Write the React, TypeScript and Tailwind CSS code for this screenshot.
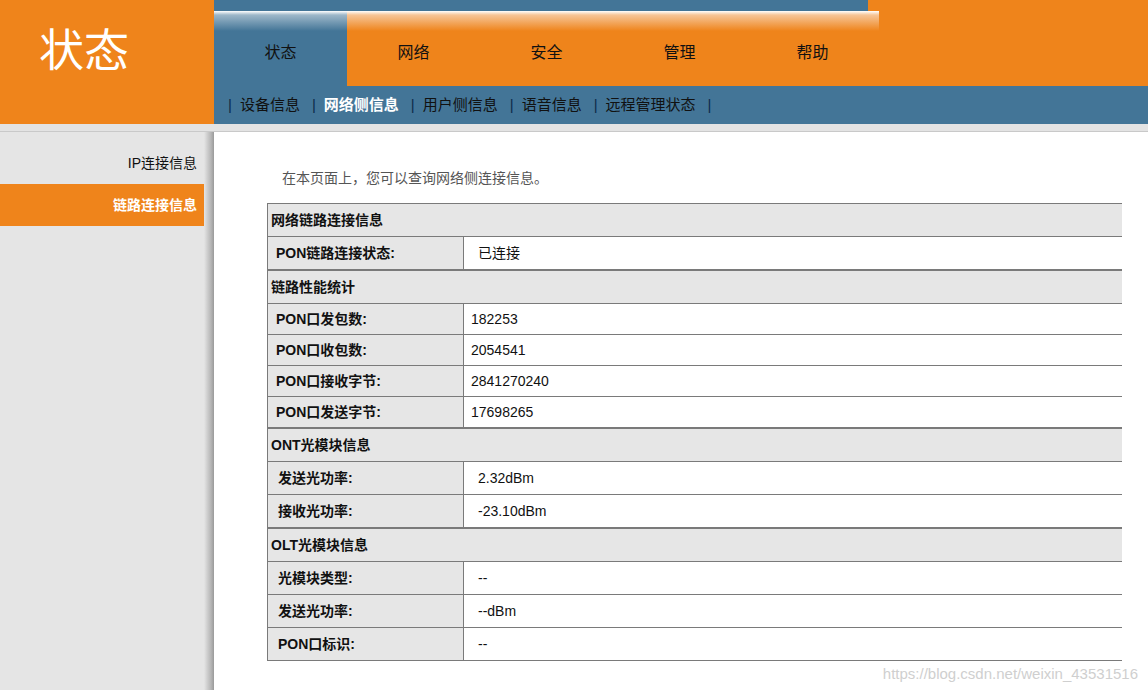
const ORANGE = 'bg-[#ef841b]';

const tabs = ['状态', '网络', '安全', '管理', '帮助'];
const subnav = ['设备信息', '网络侧信息', '用户侧信息', '语音信息', '远程管理状态'];

type Row = { label: string; value: string };
type Section = { title: string; rows: Row[]; rowH: string; labelPad: string; valuePad: string };

const sections: Section[] = [
    {
        title: '网络链路连接信息',
        rows: [{ label: 'PON链路连接状态:', value: '已连接' }],
        rowH: 'h-[33px]',
        labelPad: 'pl-[8px]',
        valuePad: 'pl-[14px]'
    },
    {
        title: '链路性能统计',
        rows: [
            { label: 'PON口发包数:', value: '182253' },
            { label: 'PON口收包数:', value: '2054541' },
            { label: 'PON口接收字节:', value: '2841270240' },
            { label: 'PON口发送字节:', value: '17698265' }
        ],
        rowH: 'h-[31px]',
        labelPad: 'pl-[8px]',
        valuePad: 'pl-[7px]'
    },
    {
        title: 'ONT光模块信息',
        rows: [
            { label: '发送光功率:', value: '2.32dBm' },
            { label: '接收光功率:', value: '-23.10dBm' }
        ],
        rowH: 'h-[33px]',
        labelPad: 'pl-[10px]',
        valuePad: 'pl-[14px]'
    },
    {
        title: 'OLT光模块信息',
        rows: [
            { label: '光模块类型:', value: '--' },
            { label: '发送光功率:', value: '--dBm' },
            { label: 'PON口标识:', value: '--' }
        ],
        rowH: 'h-[33px]',
        labelPad: 'pl-[10px]',
        valuePad: 'pl-[14px]'
    }
];

export default function App() {
    return (
        <div className="w-[1148px] h-[690px] overflow-hidden bg-[#e5e5e5] font-['Liberation_Sans','Noto_Sans_CJK_SC',sans-serif] text-[#111]">
            {/* header */}
            <div className="flex h-[124px]">
                <div className={`w-[214px] ${ORANGE} pl-[39px] pt-[22px]`}>
                    <span className="text-[45px] leading-[52px] text-white font-['Noto_Sans_CJK_SC',serif]">状态</span>
                </div>
                <div className={`flex-1 flex flex-col ${ORANGE}`}>
                    <div className="flex h-[11px]">
                        <div className="w-[654px] bg-[#437597]" />
                    </div>
                    <div className="flex h-[75px]">
                        {tabs.map((t, i) => (
                            <div
                                key={t}
                                className={`w-[133px] flex justify-center pt-[30px] text-[16px] ${
                                    i === 0
                                        ? 'bg-[linear-gradient(to_bottom,#ffffff_0px,#9db7c9_4px,#437597_20px)]'
                                        : 'bg-[linear-gradient(to_bottom,#ffffff_0px,#f6c597_4px,#ef841b_20px)]'
                                }`}
                            >
                                {t}
                            </div>
                        ))}
                    </div>
                    <div className="h-[38px] bg-[#437597] flex items-center pl-[2px] text-[15px]">
                        {subnav.map((s, i) => (
                            <div key={s} className="flex items-center">
                                <span className="text-[#0c2a4a] pl-[12px] pr-[8px]">|</span>
                                <span className={i === 1 ? 'font-bold text-white' : ''}>{s}</span>
                            </div>
                        ))}
                        <span className="text-[#0c2a4a] pl-[12px]">|</span>
                    </div>
                </div>
            </div>

            {/* body */}
            <div className="h-[8px] bg-[#e3e3e3] border-b border-[#c9c9c9]" />
            <div className="flex h-[558px]">
                <div className="w-[204px] pt-[10px] text-[14px]">
                    <div className="h-[42px] flex items-center justify-end pr-[7px]">IP连接信息</div>
                    <div className={`h-[42px] flex items-center justify-end pr-[7px] ${ORANGE} text-white font-bold`}>
                        链路连接信息
                    </div>
                </div>
                <div className="w-[10px] bg-[linear-gradient(to_right,#e5e5e5,#b5b5b5_70%,#9a9a9a)]" />
                <div className="flex-1 bg-white flex flex-col">
                    <div className="pl-[68px] pt-[37px] text-[14px] leading-[18px] text-[#555]">
                        在本页面上，您可以查询网络侧连接信息。
                    </div>
                    <div className="ml-[53px] mr-[26px] mt-[16px] text-[14px]">
                        {sections.map((sec) => (
                            <div key={sec.title} className="border-y border-l border-[#7a7a7a]">
                                <div className="h-[32px] bg-[#e6e6e6] flex items-center pl-[3px] font-bold">
                                    {sec.title}
                                </div>
                                {sec.rows.map((r) => (
                                    <div key={r.label + r.value} className={`${sec.rowH} border-t border-[#7a7a7a] flex`}>
                                        <div className={`w-[196px] bg-[#e6e6e6] border-r border-[#7a7a7a] flex items-center font-bold ${sec.labelPad}`}>
                                            {r.label}
                                        </div>
                                        <div className={`flex-1 flex items-center ${sec.valuePad}`}>{r.value}</div>
                                    </div>
                                ))}
                            </div>
                        ))}
                    </div>
                    <div className="flex justify-end pr-[10px] mt-[3px] text-[15px] leading-[20px] text-[#cfcfcf]">
                        https://blog.csdn.net/weixin_43531516
                    </div>
                </div>
            </div>
        </div>
    );
}
